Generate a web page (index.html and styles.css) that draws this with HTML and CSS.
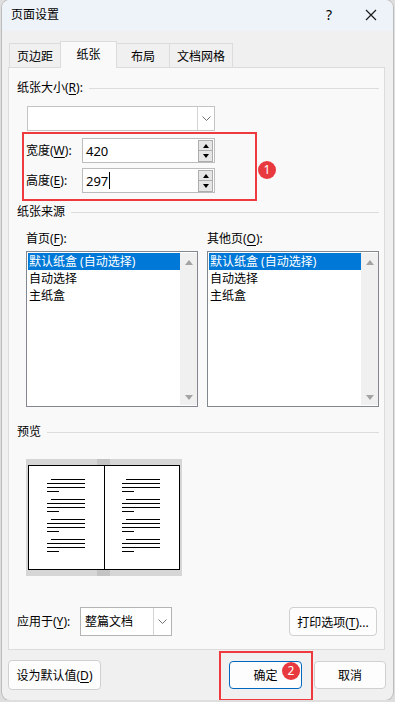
FILE: index.html
```html
<!DOCTYPE html>
<html lang="zh-CN">
<head>
  <meta charset="UTF-8" />
  <meta name="viewport" content="width=device-width, initial-scale=1.0"/>
  <title>页面设置</title>
  <link rel="stylesheet" href="styles.css">
</head>
<body>
  <div class="dialog">
    <div class="titlebar">
      <span class="title">页面设置</span>
      <span class="help">?</span>
      <span class="close">
        <svg width="12" height="12" viewBox="0 0 12 12"><path d="M1 1 L11 11 M11 1 L1 11" stroke="#1a1a1a" stroke-width="1.2" fill="none"/></svg>
      </span>
    </div>

    <div class="tabs">
      <div class="tab">页边距</div>
      <div class="tab active">纸张</div>
      <div class="tab">布局</div>
      <div class="tab">文档网格</div>
    </div>

    <div class="panel">
      <div class="group-head"><span>纸张大小(<u>R</u>):</span></div>

      <div class="combo paper-size">
        <span class="combo-text"></span>
        <span class="combo-arrow">
          <svg width="9" height="5" viewBox="0 0 9 5"><path d="M0.5 0.5 L4.5 4.5 L8.5 0.5" stroke="#707070" fill="none"/></svg>
        </span>
      </div>

      <div class="size-row first">
        <label>宽度(<u>W</u>):</label>
        <div class="spin">
          <span class="spin-value">420</span>
          <span class="spin-btns">
            <span class="spin-btn"><span class="tri-up"></span></span>
            <span class="spin-btn"><span class="tri-down"></span></span>
          </span>
        </div>
      </div>
      <div class="size-row">
        <label>高度(<u>E</u>):</label>
        <div class="spin">
          <span class="spin-value">297<span class="caret"></span></span>
          <span class="spin-btns">
            <span class="spin-btn"><span class="tri-up"></span></span>
            <span class="spin-btn"><span class="tri-down"></span></span>
          </span>
        </div>
      </div>

      <div class="group-head second"><span>纸张来源</span></div>

      <div class="sources">
        <div class="source">
          <div class="source-label">首页(<u>F</u>):</div>
          <div class="listbox">
            <ul class="items">
              <li class="selected">默认纸盒 (自动选择)</li>
              <li>自动选择</li>
              <li>主纸盒</li>
            </ul>
            <div class="scrollbar"><span class="arrow-up"></span><span class="arrow-down"></span></div>
          </div>
        </div>
        <div class="source">
          <div class="source-label">其他页(<u>O</u>):</div>
          <div class="listbox">
            <ul class="items">
              <li class="selected">默认纸盒 (自动选择)</li>
              <li>自动选择</li>
              <li>主纸盒</li>
            </ul>
            <div class="scrollbar"><span class="arrow-up"></span><span class="arrow-down"></span></div>
          </div>
        </div>
      </div>

      <div class="group-head third"><span>预览</span></div>

      <div class="preview">
        <svg width="156" height="117" viewBox="0 0 156 117">
          <rect x="0" y="0" width="156" height="117" fill="#d6d6d6"/>
          <rect x="71" y="0" width="13" height="117" fill="#c4c4c4"/>
          <rect x="2.5" y="6.5" width="76" height="104" fill="#fff" stroke="#000"/>
          <rect x="78.5" y="6.5" width="75" height="104" fill="#fff" stroke="#000"/>
          <g stroke="#000" stroke-width="1">
            <path d="M25 20.5H59 M21 24.5H59 M21 28.5H59 M21 32.5H33
                     M25 40.5H59 M21 44.5H59 M21 48.5H59 M21 52.5H33
                     M25 60.5H59 M21 64.5H59 M21 68.5H59 M21 72.5H33
                     M25 80.5H59 M21 84.5H59 M21 88.5H59 M21 92.5H33"/>
            <path d="M100 20.5H134 M96 24.5H134 M96 28.5H134 M96 32.5H108
                     M100 40.5H134 M96 44.5H134 M96 48.5H134 M96 52.5H108
                     M100 60.5H134 M96 64.5H134 M96 68.5H134 M96 72.5H108
                     M100 80.5H134 M96 84.5H134 M96 88.5H134 M96 92.5H108"/>
          </g>
        </svg>
      </div>

      <div class="apply-row">
        <label>应用于(<u>Y</u>):</label>
        <div class="combo apply">
          <span class="combo-text">整篇文档</span>
          <span class="combo-arrow">
            <svg width="9" height="5" viewBox="0 0 9 5"><path d="M0.5 0.5 L4.5 4.5 L8.5 0.5" stroke="#707070" fill="none"/></svg>
          </span>
        </div>
        <button class="btn print-options">打印选项(<u>T</u>)...</button>
      </div>

      <div class="highlight box-size"></div>
      <div class="badge badge-size">1</div>
    </div>

    <div class="footer">
      <button class="btn default-btn">设为默认值(<u>D</u>)</button>
      <div class="footer-right">
        <button class="btn ok">确定</button>
        <button class="btn cancel">取消</button>
      </div>
    </div>

    <div class="highlight box-ok"></div>
    <div class="badge badge-ok">2</div>
  </div>
</body>
</html>
```

FILE: styles.css
```css
body {
  margin: 0;
  background-color: #dedede;
  font-family: "Noto Sans", "Noto Sans CJK SC", sans-serif;
  font-size: 12px;
  line-height: 16px;
  color: #000;
}

u {
  text-decoration: underline;
  text-underline-offset: 2px;
}

.dialog {
  position: relative;
  width: 391px;
  height: 700px;
  margin-left: 2px;
  background-color: #f0f0f0;
  border-radius: 8px;
  box-shadow: 0 0 0 1px #bdbdbd;
}

.titlebar {
  display: flex;
  align-items: center;
  height: 31px;
  padding: 0 0 2px 9px;
  box-sizing: border-box;
  background-color: #eef3fa;
  border-radius: 8px 8px 0 0;
}

.title {
  flex: 1;
}

.help {
  width: 20px;
  margin-right: 26px;
  text-align: center;
  font-size: 14px;
}

.close {
  display: flex;
  width: 12px;
  margin-right: 16px;
}

.tabs {
  display: flex;
  align-items: flex-end;
  height: 27px;
  margin-top: 10px;
  padding-left: 7px;
  position: relative;
  z-index: 1;
  margin-bottom: -1px;
}

.tab {
  height: 24px;
  margin-bottom: 1px;
  box-sizing: border-box;
  padding: 5px 0 0;
  text-align: center;
  border: 1px solid #dcdcdc;
  border-bottom: none;
  border-right: none;
  background-color: #f0f0f0;
}

.tab:nth-child(1) { width: 51px; }
.tab:nth-child(2) { width: 57px; }
.tab:nth-child(3) { width: 52px; }
.tab:nth-child(4) { width: 64px; border-right: 1px solid #dcdcdc; }

.tab.active {
  height: 27px;
  margin-bottom: 0;
  padding-top: 5px;
  background-color: #f9f9f9;
  border-right: 1px solid #dcdcdc;
}

.tab.active + .tab {
  border-left: none;
}

.panel {
  position: relative;
  height: 583px;
  margin: 0 8px 0 6px;
  padding: 12px 5px 0 8px;
  box-sizing: border-box;
  background-color: #f9f9f9;
  border: 1px solid #dcdcdc;
}

.group-head {
  display: flex;
  align-items: center;
  height: 16px;
  gap: 6px;
}

.group-head::after {
  content: "";
  flex: 1;
  border-top: 1px solid #dcdcdc;
}

.group-head.second {
  margin-top: 11px;
}

.group-head.third {
  margin-top: 17px;
}

.combo {
  display: flex;
  height: 25px;
  box-sizing: border-box;
  background-color: #fff;
  border: 1px solid #c4c4c4;
}

.combo-text {
  flex: 1;
  padding: 4px 0 0 3px;
}

.combo-arrow {
  display: flex;
  align-items: center;
  justify-content: center;
  width: 16px;
  border-left: 1px solid #d4d4d4;
}

.paper-size {
  width: 188px;
  margin: 10px 0 0 10px;
}

.size-row {
  display: flex;
  align-items: center;
  margin: 5px 0 0 9px;
}

.size-row.first {
  margin-top: 7px;
}

.size-row label {
  width: 56px;
}

.spin {
  display: flex;
  width: 133px;
  height: 25px;
  box-sizing: border-box;
  background-color: #fff;
  border: 1px solid #bcbcbc;
}

.spin-value {
  flex: 1;
  display: flex;
  align-items: center;
  padding-left: 3px;
  font-size: 13px;
}

.caret {
  display: inline-block;
  width: 1px;
  height: 17px;
  margin-left: 1px;
  background-color: #000;
}

.spin-btns {
  display: flex;
  flex-direction: column;
  width: 15px;
  margin: 1px 1px 0 0;
}

.spin-btn {
  display: flex;
  align-items: center;
  justify-content: center;
  height: 11px;
  box-sizing: border-box;
  background-color: #e6e6e6;
  border: 1px solid #adadad;
}

.spin-btn + .spin-btn {
  border-top: none;
}

.tri-up {
  border-left: 3px solid transparent;
  border-right: 3px solid transparent;
  border-bottom: 4px solid #000;
}

.tri-down {
  border-left: 3px solid transparent;
  border-right: 3px solid transparent;
  border-top: 4px solid #000;
}

.sources {
  display: flex;
  gap: 9px;
  margin: 11px 0 0 9px;
}

.source-label {
  height: 16px;
  margin-bottom: 4px;
}

.listbox {
  display: flex;
  width: 172px;
  height: 156px;
  box-sizing: border-box;
  padding: 1px 0 1px 1px;
  background-color: #fff;
  border: 1px solid #828790;
}

.items {
  flex: 1;
  margin: 0;
  padding: 0;
  list-style: none;
}

.items li {
  height: 17px;
  line-height: 17px;
  padding-left: 1px;
}

.items li.selected {
  background-color: #0078d7;
  color: #fff;
}

.scrollbar {
  display: flex;
  flex-direction: column;
  justify-content: space-between;
  align-items: center;
  width: 17px;
  padding: 7px 0 5px;
  box-sizing: border-box;
  background-color: #f0f0f0;
}

.arrow-up {
  border-left: 4px solid transparent;
  border-right: 4px solid transparent;
  border-bottom: 5px solid #a3a3a3;
}

.arrow-down {
  border-left: 4px solid transparent;
  border-right: 4px solid transparent;
  border-top: 5px solid #a3a3a3;
}

.preview {
  display: flex;
  margin: 19px 0 0 9px;
}

.apply-row {
  display: flex;
  align-items: center;
  margin-top: 31px;
}

.apply-row label {
  width: 63px;
}

.apply {
  width: 92px;
  height: 29px;
  border-color: #b4b4b4;
}

.apply .combo-text {
  padding: 6px 0 0 4px;
  font-size: 12px;
}

.apply .combo-arrow {
  width: 17px;
}

.btn {
  font-family: "Noto Sans", "Noto Sans CJK SC", sans-serif;
  font-size: 12px;
  color: #000;
  background-color: #fdfdfd;
  border: 1px solid #d0d0d0;
  border-radius: 4px;
  padding: 0;
}

.print-options {
  width: 88px;
  height: 29px;
  margin-left: auto;
  margin-right: 2px;
}

.footer {
  display: flex;
  justify-content: space-between;
  align-items: center;
  height: 50px;
  padding: 0 7px 0 6px;
  box-sizing: border-box;
}

.footer-right {
  display: flex;
  gap: 12px;
}

.default-btn {
  width: 93px;
  height: 30px;
}

.ok {
  width: 73px;
  height: 28px;
  border-color: #0067c0;
}

.cancel {
  width: 72px;
  height: 28px;
}

.highlight {
  position: absolute;
  box-sizing: border-box;
  border: 2px solid #ee3a3f;
  z-index: 2;
}

.box-size {
  left: 13px;
  top: 64px;
  width: 235px;
  height: 69px;
}

.box-ok {
  left: 217px;
  top: 651px;
  width: 94px;
  height: 50px;
}

.badge {
  position: absolute;
  width: 18px;
  height: 18px;
  border-radius: 50%;
  background-color: #e83a3e;
  color: #fff;
  font-size: 12px;
  line-height: 18px;
  text-align: center;
  z-index: 3;
}

.badge-size {
  left: 249px;
  top: 93px;
}

.badge-ok {
  left: 280px;
  top: 662px;
}
```
